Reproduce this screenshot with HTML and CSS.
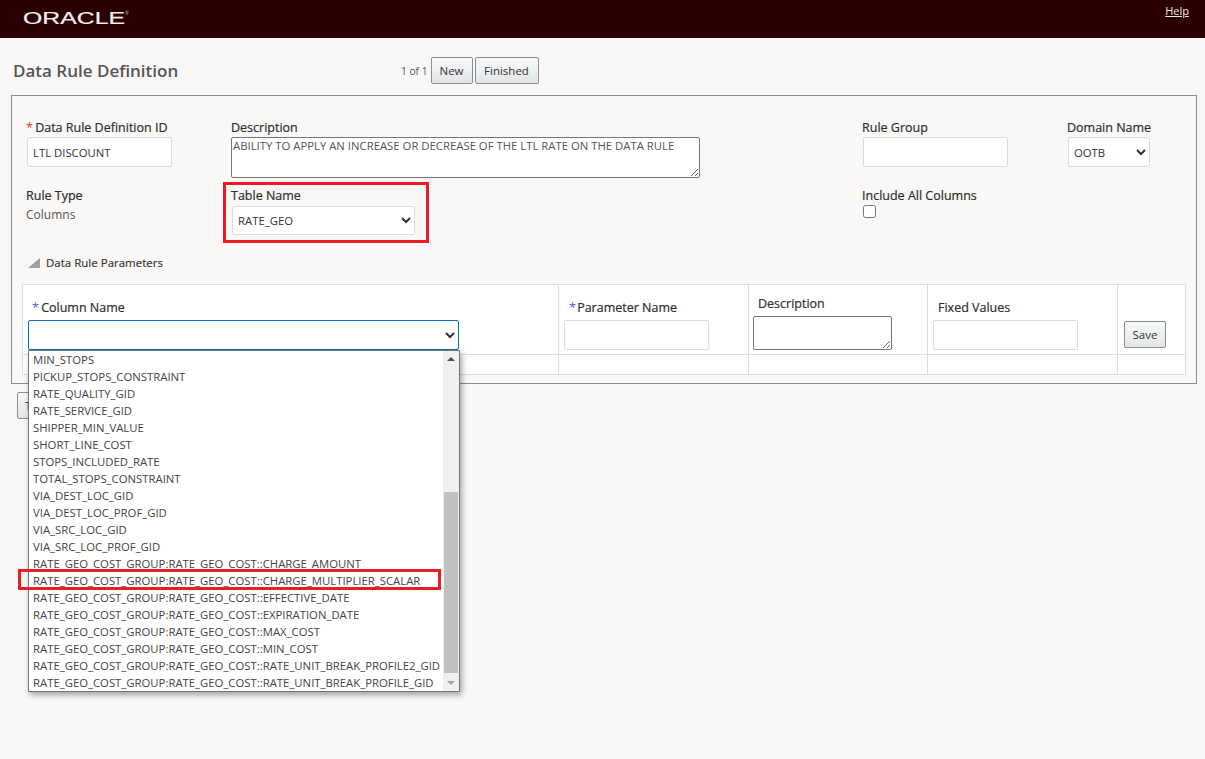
FILE: index.html
```html
<!DOCTYPE html>
<html lang="en">
<head>
<meta charset="utf-8">
<title>Data Rule Definition</title>
<link rel="stylesheet" href="styles.css">
</head>
<body>
<header class="topbar">
  <svg class="logo" width="110" height="20" viewBox="0 0 110 20" role="img" aria-label="Oracle"><text class="logo-text" x="0" y="15.5" textLength="102" lengthAdjust="spacingAndGlyphs">ORACLE</text><text class="logo-mark" x="102" y="7">®</text></svg>
  <a class="help" href="#">Help</a>
</header>
<div class="titlebar">
  <h1 class="title">Data Rule Definition</h1>
  <div class="pager">
    <span class="pager-count">1 of 1</span>
    <button class="btn btn-new" type="button">New</button>
    <button class="btn btn-finished" type="button">Finished</button>
  </div>
</div>
<main class="panel">
  <div class="form-grid">
    <div class="field">
      <label class="label"><span class="req">*</span> Data Rule Definition ID</label>
      <input class="input" type="text" value="LTL DISCOUNT">
    </div>
    <div class="field">
      <label class="label">Description</label>
      <textarea class="area area-wide">ABILITY TO APPLY AN INCREASE OR DECREASE OF THE LTL RATE ON THE DATA RULE</textarea>
    </div>
    <div class="field">
      <label class="label">Rule Group</label>
      <input class="input" type="text">
    </div>
    <div class="field">
      <label class="label">Domain Name</label>
      <select class="select select-domain"><option>OOTB</option></select>
    </div>
    <div class="field field-lower">
      <label class="label">Rule Type</label>
      <span class="value">Columns</span>
    </div>
    <div class="callout">
      <label class="label">Table Name</label>
      <select class="select select-table"><option>RATE_GEO</option></select>
    </div>
    <div class="field field-lower">
      <label class="label">Include All Columns</label>
      <input class="check" type="checkbox">
    </div>
    <div></div>
  </div>
  <div class="section-head"><span class="triangle"></span><span class="section-title">Data Rule Parameters</span></div>
  <table class="params">
    <colgroup><col class="c1"><col class="c2"><col class="c3"><col class="c4"><col class="c5"></colgroup>
    <tr class="params-head">
      <td>
        <label class="label"><span class="req req-blue">*</span> Column Name</label>
        <div class="combo">
          <select class="select select-column"><option></option></select>
          <div class="listbox">
            <ul class="options">
              <li>MIN_STOPS</li>
              <li>PICKUP_STOPS_CONSTRAINT</li>
              <li>RATE_QUALITY_GID</li>
              <li>RATE_SERVICE_GID</li>
              <li>SHIPPER_MIN_VALUE</li>
              <li>SHORT_LINE_COST</li>
              <li>STOPS_INCLUDED_RATE</li>
              <li>TOTAL_STOPS_CONSTRAINT</li>
              <li>VIA_DEST_LOC_GID</li>
              <li>VIA_DEST_LOC_PROF_GID</li>
              <li>VIA_SRC_LOC_GID</li>
              <li>VIA_SRC_LOC_PROF_GID</li>
              <li>RATE_GEO_COST_GROUP:RATE_GEO_COST::CHARGE_AMOUNT</li>
              <li class="marked">RATE_GEO_COST_GROUP:RATE_GEO_COST::CHARGE_MULTIPLIER_SCALAR</li>
              <li>RATE_GEO_COST_GROUP:RATE_GEO_COST::EFFECTIVE_DATE</li>
              <li>RATE_GEO_COST_GROUP:RATE_GEO_COST::EXPIRATION_DATE</li>
              <li>RATE_GEO_COST_GROUP:RATE_GEO_COST::MAX_COST</li>
              <li>RATE_GEO_COST_GROUP:RATE_GEO_COST::MIN_COST</li>
              <li>RATE_GEO_COST_GROUP:RATE_GEO_COST::RATE_UNIT_BREAK_PROFILE2_GID</li>
              <li>RATE_GEO_COST_GROUP:RATE_GEO_COST::RATE_UNIT_BREAK_PROFILE_GID</li>
            </ul>
            <div class="scrollbar">
              <span class="arrow arrow-up"></span>
              <span class="thumb"></span>
              <span class="arrow arrow-down"></span>
            </div>
          </div>
        </div>
      </td>
      <td>
        <label class="label"><span class="req req-blue req-tight">*</span> Parameter Name</label>
        <input class="input" type="text">
      </td>
      <td>
        <label class="label label-tall">Description</label>
        <textarea class="area area-small"></textarea>
      </td>
      <td>
        <label class="label">Fixed Values</label>
        <input class="input" type="text">
      </td>
      <td class="cell-save"><button class="btn btn-save" type="button">Save</button></td>
    </tr>
    <tr class="params-row"><td></td><td></td><td></td><td></td><td></td></tr>
  </table>
</main>
<div class="actions"><button class="btn btn-action" type="button">T</button></div>
</body>
</html>
```
FILE: styles.css
```css
*, *::after { box-sizing: border-box; }
html, body { margin: 0; height: 100%; overflow: hidden; }
body {
  background: #f9f8f6;
  color: #333;
  font: 12px/16px "Open Sans", "Noto Sans", sans-serif;
}
.topbar {
  height: 38px;
  background: #2b0000;
  display: flex;
  justify-content: space-between;
  padding: 0 16px 0 23px;
}
.logo { margin-top: 8px; }
.logo-text {
  font: 400 16.5px "Liberation Sans", sans-serif;
  fill: #f4f0f0;
  stroke: #f4f0f0;
  stroke-width: 0.2;
}
.logo-mark {
  font: 400 5px "Liberation Sans", sans-serif;
  fill: #cfc4c4;
}
.help { color: #f0e8e8; font-size: 11px; line-height: 14px; margin-top: 4px; text-decoration: underline; }
.titlebar {
  height: 57px;
  display: flex;
  padding: 19px 0 0 13px;
}
.title {
  width: 388px;
  margin: 0;
  font-size: 17px;
  font-weight: 600;
  line-height: 28px;
  color: #555;
}
.pager { display: flex; gap: 2px; height: 27px; align-items: center; }
.pager-count { font-size: 10.2px; color: #555; margin-right: 1px; }
.btn {
  height: 27px;
  padding: 0;
  border: 1px solid #8a8f94;
  border-radius: 2px;
  background: linear-gradient(#f8f9f9, #e3e6e8);
  color: #333;
  font: 500 11.5px/1 "Open Sans", sans-serif;
}
.btn-new { width: 42px; }
.btn-finished { width: 64px; }
.btn-save { width: 42px; }
.btn-action { width: 60px; padding-left: 7px; text-align: left; }
.panel {
  width: 1186px;
  height: 289px;
  margin-left: 11px;
  border: 1px solid #8c8c8c;
  padding: 23px 10px 0;
}
.form-grid {
  display: grid;
  grid-template-columns: 205px 631px 205px 1fr;
  margin-left: 4px;
  row-gap: 4px;
  align-items: start;
}
.field { display: flex; flex-direction: column; align-items: flex-start; }
.field-lower { padding-top: 5px; }
.label {
  display: block;
  height: 16px;
  font-size: 12.5px;
  font-weight: 500;
  line-height: 18px;
  color: #2e2e2e;
  white-space: nowrap;
  -webkit-text-stroke: 0.2px #2e2e2e;
}
.req { color: #e0402f; font-weight: 400; margin-right: -1px; -webkit-text-stroke: 0; }
.req-blue { color: #4f5fe0; }
.req-tight { margin-right: -2px; }
.input {
  display: block;
  width: 145px;
  height: 30px;
  margin: 2px 0 0 1px;
  padding: 0 5px;
  border: 1px solid #dcdcdc;
  border-radius: 2px;
  background: #fff;
  color: #333;
  font: 11.33px "Open Sans", sans-serif;
  outline: none;
}
.area {
  display: block;
  margin-top: 2px;
  padding: 1px;
  border: 1px solid #767676;
  border-radius: 2px;
  background: #fff;
  color: #555;
  font: 11.33px/14px "Open Sans", sans-serif;
  outline: none;
}
.area-wide { width: 469px; height: 41px; }
.area-small { width: 139px; height: 34px; margin: 4px 0 0 -1px; }
.select {
  display: block;
  height: 30px;
  margin: 2px 0 0 1px;
  padding: 0 1px;
  border: 1px solid #dcdcdc;
  border-radius: 2px;
  background-color: #fff;
  color: #333;
  font: 11.33px "Open Sans", sans-serif;
}
.select-domain { width: 82px; }
.select-table { width: 183px; height: 29px; margin: 3px 0 0 1px; }
.select-column { width: 431px; margin: 0; border-color: #0f6cbd; }
.value { color: #555; margin-top: 4px; }
.callout {
  width: 206px;
  height: 61px;
  margin-left: -8px;
  padding: 2px 0 0 5px;
  border: 3px solid #ed1c24;
}
.section-head {
  display: flex;
  align-items: center;
  height: 16px;
  margin: 12px 0 13px 6px;
}
.triangle {
  width: 0;
  height: 0;
  margin-right: 6px;
  border-style: solid;
  border-width: 0 0 10px 12px;
  border-color: transparent transparent #a0a0a0 transparent;
}
.section-title { font-size: 11.5px; font-weight: 500; color: #333; -webkit-text-stroke: 0.15px #333; }
.params {
  width: 1163px;
  border-collapse: collapse;
  table-layout: fixed;
  background: #fff;
}
.c1 { width: 536px; }
.c2 { width: 190px; }
.c3 { width: 179px; }
.c4 { width: 190px; }
.c5 { width: 68px; }
.params td {
  border: 1px solid #d5dfe8;
  padding: 0;
}
.params-head { height: 70px; }
.params-head td { padding: 15px 5px 0; vertical-align: top; }
.params .label { line-height: 16px; }
.params-head td:first-child .label { margin-left: 4px; margin-bottom: 4px; }
.params-head td:nth-child(2) .label,
.params-head td:nth-child(4) .label { margin-left: 5px; }
.params-head .input { margin: 4px 0 0; }
.params .label-tall { margin: -4px 0 0 4px; }
.params-head .cell-save { padding: 36px 0 0 6px; }
.params-row { height: 20px; }
.combo { position: relative; width: 431px; }
.listbox {
  position: absolute;
  top: 30px;
  left: 0;
  width: 432px;
  height: 342px;
  display: flex;
  border: 1px solid #767676;
  background: #fff;
  box-shadow: 2px 3px 6px rgba(0, 0, 0, 0.35);
}
.options {
  flex: 1;
  min-width: 0;
  margin: 0;
  padding: 0;
  list-style: none;
}
.options li {
  position: relative;
  height: 17px;
  padding-left: 4px;
  line-height: 17px;
  font-size: 11.33px;
  color: #444;
  white-space: nowrap;
}
.marked::after {
  content: "";
  position: absolute;
  top: -3px;
  left: -11px;
  width: 423px;
  height: 21px;
  border: 3px solid #ed1c24;
}
.scrollbar {
  position: relative;
  flex: none;
  width: 16px;
  background: #f0f0f0;
}
.thumb {
  position: absolute;
  top: 141px;
  left: 1px;
  width: 14px;
  height: 181px;
  background: #c0c0c0;
}
.arrow {
  position: absolute;
  left: 4px;
  width: 0;
  height: 0;
  border-left: 4px solid transparent;
  border-right: 4px solid transparent;
}
.arrow-up { top: 6px; border-bottom: 4px solid #505050; }
.arrow-down { bottom: 6px; border-top: 4px solid #a3a3a3; }
.check { display: block; width: 13px; height: 13px; margin: 2px 0 0 1px; }
.actions { margin: 8px 0 0 17px; }
```
